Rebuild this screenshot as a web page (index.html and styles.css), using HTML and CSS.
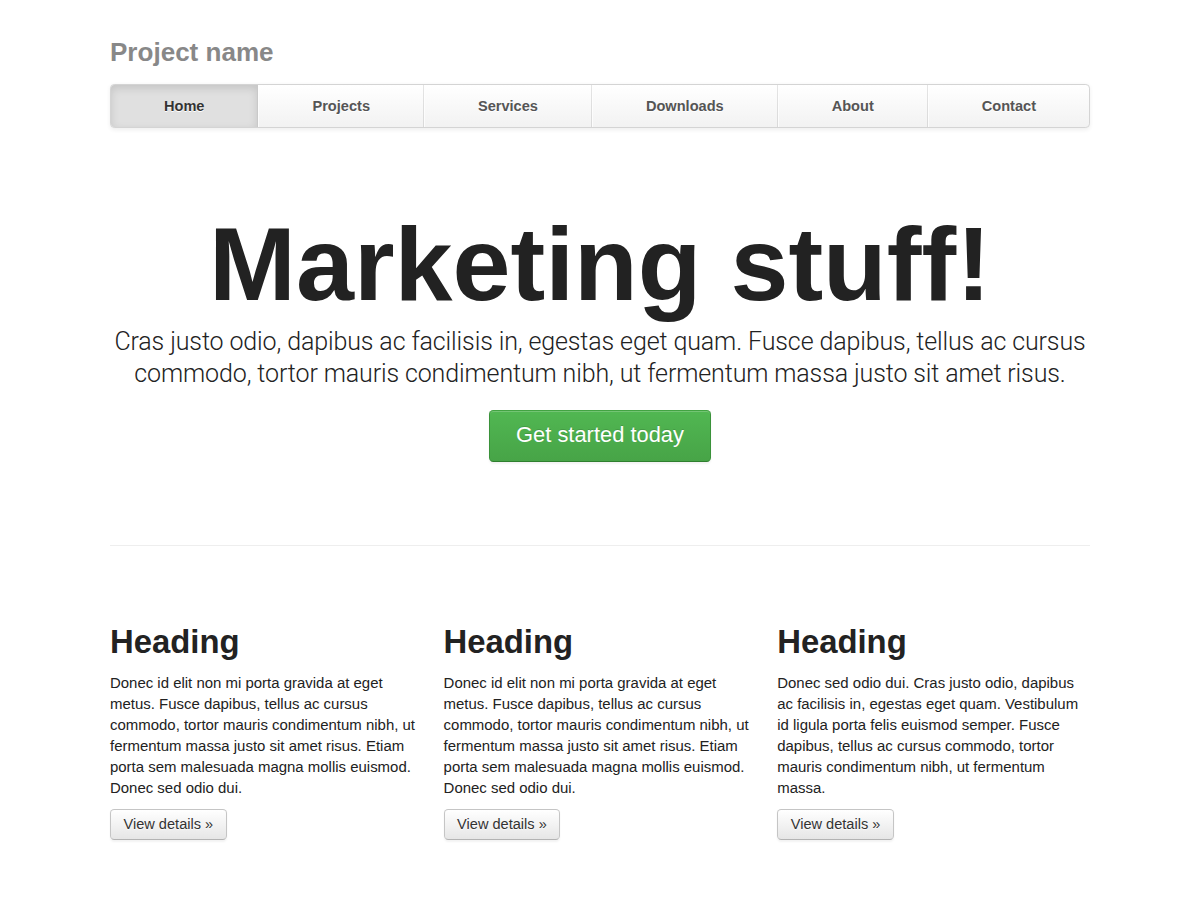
FILE: index.html
```html
<!DOCTYPE html>
<html lang="en">
<head>
<meta charset="utf-8">
<title>Template</title>
<link rel="stylesheet" href="styles.css">
</head>
<body>
<div class="container">
  <div class="masthead">
    <h3 class="muted">Project name</h3>
    <div class="navbar">
      <ul class="nav">
        <li class="active"><a href="#">Home</a></li>
        <li><a href="#">Projects</a></li>
        <li><a href="#">Services</a></li>
        <li><a href="#">Downloads</a></li>
        <li><a href="#">About</a></li>
        <li><a href="#">Contact</a></li>
      </ul>
    </div>
  </div>

  <div class="jumbotron">
    <h1>Marketing stuff!</h1>
    <p class="lead">Cras justo odio, dapibus ac facilisis in, egestas eget quam. Fusce dapibus, tellus ac cursus commodo, tortor mauris condimentum nibh, ut fermentum massa justo sit amet risus.</p>
    <a class="btn-success" href="#">Get started today</a>
  </div>

  <hr class="divider">

  <div class="marketing">
    <div class="col">
      <h2>Heading</h2>
      <p>Donec id elit non mi porta gravida at eget metus. Fusce dapibus, tellus ac cursus commodo, tortor mauris condimentum nibh, ut fermentum massa justo sit amet risus. Etiam porta sem malesuada magna mollis euismod. Donec sed odio dui.</p>
      <a class="btn" href="#">View details &raquo;</a>
    </div>
    <div class="col">
      <h2>Heading</h2>
      <p>Donec id elit non mi porta gravida at eget metus. Fusce dapibus, tellus ac cursus commodo, tortor mauris condimentum nibh, ut fermentum massa justo sit amet risus. Etiam porta sem malesuada magna mollis euismod. Donec sed odio dui.</p>
      <a class="btn" href="#">View details &raquo;</a>
    </div>
    <div class="col">
      <h2>Heading</h2>
      <p>Donec sed odio dui. Cras justo odio, dapibus ac facilisis in, egestas eget quam. Vestibulum id ligula porta felis euismod semper. Fusce dapibus, tellus ac cursus commodo, tortor mauris condimentum nibh, ut fermentum massa.</p>
      <a class="btn" href="#">View details &raquo;</a>
    </div>
  </div>
</div>
</body>
</html>
```

FILE: styles.css
```css
html, body {
  margin: 0;
  padding: 0;
  background: #fff;
}
body {
  font-family: "Liberation Sans", Arial, sans-serif;
  font-size: 14px;
  line-height: 20px;
  color: #333;
}
.container {
  width: 940px;
  margin: 0 auto;
  zoom: 1.0426;
  padding-top: 21px;
  padding-bottom: 20px;
}
.masthead {
  margin-bottom: 30px;
}
.muted {
  margin: 10px 0;
  font-size: 25px;
  line-height: 40px;
  font-weight: bold;
  color: #888;
}
.navbar {
  background: linear-gradient(to bottom, #ffffff, #f2f2f2);
  border: 1px solid #d4d4d4;
  border-radius: 4px;
  box-shadow: 0 1px 4px rgba(0,0,0,0.065);
}
.nav {
  list-style: none;
  margin: 0;
  padding: 0;
  display: flex;
}
.nav li {
  flex: 1 1 auto;
  display: flex;
}
.nav li a {
  flex: 1;
  display: block;
  padding: 10px 15px;
  text-align: center;
  font-weight: bold;
  color: #555;
  text-decoration: none;
  text-shadow: 0 1px 0 #fff;
  border-left: 1px solid rgba(255,255,255,0.75);
  border-right: 1px solid rgba(0,0,0,0.1);
}
.nav li:first-child a {
  border-left: 0;
  border-radius: 3px 0 0 3px;
}
.nav li:last-child a {
  border-right: 0;
  border-radius: 0 3px 3px 0;
}
.nav li.active a {
  background: #e0e0e0;
  color: #333;
  box-shadow: inset 0 3px 8px rgba(0,0,0,0.125);
}
.jumbotron {
  margin: 80px 0;
  text-align: center;
}
.jumbotron h1 {
  margin: 10px 0;
  font-size: 100px;
  line-height: 1;
  font-weight: bold;
  color: #222;
}
.lead {
  margin: 0 0 20px;
  font-family: Roboto, "Liberation Sans", sans-serif;
  font-weight: 300;
  font-size: 24px;
  line-height: 1.25;
  letter-spacing: -0.12px;
  color: #222;
}
.btn-success {
  display: inline-block;
  padding: 14px 25px;
  font-size: 21px;
  line-height: 20px;
  color: #fff;
  text-decoration: none;
  text-shadow: 0 -1px 0 rgba(0,0,0,0.15);
  background: linear-gradient(to bottom, #51b752, #47a447);
  border: 1px solid #3d8f3d;
  border-color: #42a342 #3a923a #2f7f2f;
  border-radius: 4px;
  box-shadow: inset 0 1px 0 rgba(255,255,255,0.2), 0 1px 2px rgba(0,0,0,0.05);
}
.divider {
  margin: 20px 0;
  border: 0;
  border-top: 1px solid #eeeeee;
  border-bottom: 1px solid #ffffff;
}
.marketing {
  margin: 61px 0 0;
  display: grid;
  grid-template-columns: repeat(3, 300px);
  column-gap: 20px;
}
.marketing h2 {
  margin: 10px 0;
  font-size: 31.5px;
  line-height: 40px;
  font-weight: bold;
  color: #222;
}
.marketing p {
  margin: 0 0 10px;
  font-size: 14.35px;
  color: #222;
}
.btn {
  display: inline-block;
  padding: 4px 12px;
  font-size: 14px;
  line-height: 20px;
  color: #333;
  text-decoration: none;
  text-shadow: 0 1px 1px rgba(255,255,255,0.75);
  background: linear-gradient(to bottom, #ffffff, #e6e6e6);
  border: 1px solid #c5c5c5;
  border-bottom-color: #b3b3b3;
  border-radius: 4px;
  box-shadow: inset 0 1px 0 rgba(255,255,255,0.2), 0 1px 2px rgba(0,0,0,0.05);
}
```
